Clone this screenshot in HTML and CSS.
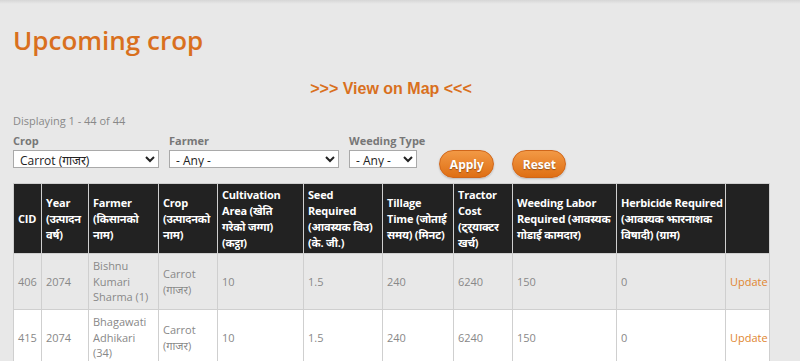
FILE: index.html
```html
<!DOCTYPE html>
<html lang="ne">
<head>
    <meta charset="UTF-8">
    <title>Upcoming crop</title>
    <link rel="stylesheet" href="styles.css">
</head>
<body>
    <div class="topbar"></div>
    <div class="container">
        <h1 class="title">Upcoming crop</h1>

        <div class="map-link"><a href="#">&gt;&gt;&gt; View on Map &lt;&lt;&lt;</a></div>

        <div class="summary">Displaying 1 - 44 of 44</div>

        <form class="filters">
            <div class="filter-group">
                <label>Crop</label>
                <select class="sel-crop">
                    <option>Carrot (गाजर)</option>
                </select>
            </div>
            <div class="filter-group">
                <label>Farmer</label>
                <select class="sel-farmer">
                    <option>- Any -</option>
                </select>
            </div>
            <div class="filter-group">
                <label>Weeding Type</label>
                <select class="sel-weeding">
                    <option>- Any -</option>
                </select>
            </div>
            <button type="button" class="btn btn-apply">Apply</button>
            <button type="button" class="btn btn-reset">Reset</button>
        </form>

        <table>
            <colgroup>
                <col style="width:28px">
                <col style="width:47px">
                <col style="width:70px">
                <col style="width:59px">
                <col style="width:86px">
                <col style="width:79px">
                <col style="width:71px">
                <col style="width:59px">
                <col style="width:104px">
                <col style="width:109px">
                <col style="width:44px">
            </colgroup>
            <thead>
                <tr>
                    <th>CID</th>
                    <th>Year<br>(उत्पादन<br>वर्ष)</th>
                    <th>Farmer<br>(किसानको<br>नाम)</th>
                    <th>Crop<br>(उत्पादनको<br>नाम)</th>
                    <th>Cultivation<br>Area (खेति<br>गरेको जग्गा)<br>(कट्ठा)</th>
                    <th>Seed<br>Required<br>(आवस्यक विउ)<br>(के. जी.)</th>
                    <th>Tillage<br>Time (जोताई<br>समय) (मिनट)</th>
                    <th>Tractor<br>Cost<br>(ट्र्याक्टर<br>खर्च)</th>
                    <th>Weeding Labor<br>Required (आवस्यक<br>गोडाई कामदार)</th>
                    <th>Herbicide Required<br>(आवस्यक झारनाशक<br>विषादी) (ग्राम)</th>
                    <th></th>
                </tr>
            </thead>
            <tbody>
                <tr class="odd">
                    <td>406</td>
                    <td>2074</td>
                    <td>Bishnu Kumari Sharma (1)</td>
                    <td>Carrot (गाजर)</td>
                    <td>10</td>
                    <td>1.5</td>
                    <td>240</td>
                    <td>6240</td>
                    <td>150</td>
                    <td>0</td>
                    <td><a href="#" class="update">Update</a></td>
                </tr>
                <tr class="even">
                    <td>415</td>
                    <td>2074</td>
                    <td>Bhagawati Adhikari (34)</td>
                    <td>Carrot (गाजर)</td>
                    <td>10</td>
                    <td>1.5</td>
                    <td>240</td>
                    <td>6240</td>
                    <td>150</td>
                    <td>0</td>
                    <td><a href="#" class="update">Update</a></td>
                </tr>
            </tbody>
        </table>
    </div>
</body>
</html>
```

FILE: styles.css
```css
* {
    margin: 0;
    padding: 0;
    box-sizing: border-box;
}

body {
    background: #e8e8e8;
    font-family: "Open Sans", "Noto Sans", "Noto Sans Devanagari", sans-serif;
    color: #777;
    font-size: 11px;
}

.topbar {
    height: 4px;
    background: linear-gradient(#d6d6d6, #e8e8e8);
}

.container {
    width: 756px;
    margin-left: 13px;
}

.title {
    color: #d9701e;
    font-size: 26px;
    font-weight: 600;
    line-height: 30px;
    margin-top: 21px;
}

.map-link {
    text-align: center;
    margin-top: 24px;
    line-height: 20px;
}

.map-link a {
    color: #d9701e;
    font-family: "Liberation Sans", Arial, sans-serif;
    font-weight: bold;
    font-size: 16px;
    text-decoration: none;
}

.summary {
    margin-top: 14px;
    color: #888;
    font-size: 11px;
    line-height: 14px;
}

.filters {
    display: flex;
    align-items: flex-start;
    margin-top: 6px;
    height: 46px;
}

.filter-group {
    display: flex;
    flex-direction: column;
    margin-right: 10px;
}

.filter-group label {
    color: #777;
    font-weight: bold;
    font-size: 11px;
    line-height: 14px;
    height: 16px;
}

.filter-group select {
    height: 18px;
    border: 1px solid #a9a9a9;
    background: #fff;
    font-family: inherit;
    font-size: 12px;
    color: #222;
    padding-left: 2px;
}

.sel-crop { width: 146px; }
.sel-farmer { width: 170px; }
.sel-weeding { width: 68px; }

.btn {
    margin-top: 16px;
    height: 28px;
    border: 1px solid #d0661a;
    border-radius: 14px;
    background: linear-gradient(#f29945, #df6f14);
    color: #fff;
    font-family: inherit;
    font-weight: bold;
    font-size: 12px;
    text-shadow: 0 1px 1px rgba(0,0,0,0.35);
    box-shadow: 0 1px 2px rgba(0,0,0,0.2);
}

.btn-apply {
    width: 55px;
    margin-left: 4px;
}

.btn-reset {
    width: 54px;
    margin-left: 18px;
}

table {
    width: 756px;
    table-layout: fixed;
    border-collapse: collapse;
    margin-top: 3px;
}

th, td {
    border: 1px solid #cfcfcf;
    text-align: left;
    padding: 0 4px;
}

th {
    background: #222;
    color: #fff;
    font-weight: bold;
    font-size: 11px;
    letter-spacing: -0.2px;
    white-space: nowrap;
    line-height: 16px;
    height: 70px;
}

td {
    height: 56px;
    line-height: 15.5px;
    font-size: 11px;
    color: #888;
}

tr.odd td {
    background: #e8e8e8;
}

tr.even td {
    background: #fff;
}

.update {
    color: #e0852f;
    text-decoration: none;
}
```
